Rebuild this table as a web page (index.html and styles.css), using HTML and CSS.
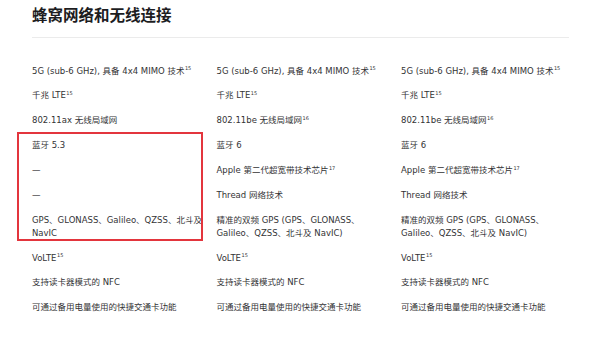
FILE: index.html
```html
<!DOCTYPE html>
<html lang="zh-CN">
<head>
<meta charset="utf-8">
<link rel="stylesheet" href="styles.css">
</head>
<body>
<div class="page">
  <h2 class="title">蜂窝网络和无线连接</h2>
  <div class="divider"></div>
  <div class="grid">
    <ul class="col">
      <li>5G (sub-6 GHz), 具备 4x4 MIMO 技术<sup>15</sup></li>
      <li>千兆 LTE<sup>15</sup></li>
      <li>802.11ax 无线局域网</li>
      <li>蓝牙 5.3</li>
      <li>—</li>
      <li>—</li>
      <li>GPS、GLONASS、Galileo、QZSS、北斗及 NavIC</li>
      <li>VoLTE<sup>15</sup></li>
      <li>支持读卡器模式的 NFC</li>
      <li>可通过备用电量使用的快捷交通卡功能</li>
    </ul>
    <ul class="col">
      <li>5G (sub-6 GHz), 具备 4x4 MIMO 技术<sup>15</sup></li>
      <li>千兆 LTE<sup>15</sup></li>
      <li>802.11be 无线局域网<sup>16</sup></li>
      <li>蓝牙 6</li>
      <li>Apple 第二代超宽带技术芯片<sup>17</sup></li>
      <li>Thread 网络技术</li>
      <li>精准的双频 GPS (GPS、GLONASS、Galileo、QZSS、北斗及 NavIC)</li>
      <li>VoLTE<sup>15</sup></li>
      <li>支持读卡器模式的 NFC</li>
      <li>可通过备用电量使用的快捷交通卡功能</li>
    </ul>
    <ul class="col">
      <li>5G (sub-6 GHz), 具备 4x4 MIMO 技术<sup>15</sup></li>
      <li>千兆 LTE<sup>15</sup></li>
      <li>802.11be 无线局域网<sup>16</sup></li>
      <li>蓝牙 6</li>
      <li>Apple 第二代超宽带技术芯片<sup>17</sup></li>
      <li>Thread 网络技术</li>
      <li>精准的双频 GPS (GPS、GLONASS、Galileo、QZSS、北斗及 NavIC)</li>
      <li>VoLTE<sup>15</sup></li>
      <li>支持读卡器模式的 NFC</li>
      <li>可通过备用电量使用的快捷交通卡功能</li>
    </ul>
  </div>
  <div class="highlight"></div>
</div>
</body>
</html>
```
FILE: styles.css
```css
html, body {
  margin: 0;
  padding: 0;
  background: #ffffff;
}
body {
  font-family: "DejaVu Sans", "Noto Sans CJK SC", sans-serif;
  color: #333335;
}
.page {
  position: relative;
  width: 600px;
  height: 341px;
  padding: 4px 31px 0 32px;
  box-sizing: border-box;
}
.title {
  margin: 0;
  font-size: 15.5px;
  line-height: 20px;
  font-weight: 700;
  color: #1d1d1f;
  font-family: "Noto Sans CJK SC", sans-serif;
}
.divider {
  margin-top: 13px;
  height: 1px;
  background: #ebebeb;
}
.grid {
  margin-top: 26.5px;
  display: grid;
  grid-template-columns: 170px 170px 170px;
  column-gap: 14.5px;
}
.col {
  list-style: none;
  margin: 0;
  padding: 0;
  display: flex;
  flex-direction: column;
  gap: 12.1px;
}
.col li {
  font-size: 8.5px;
  line-height: 12.8px;
}
.col sup {
  font-size: 5px;
  line-height: 0;
  vertical-align: 3.5px;
  margin-left: 0.5px;
}
.highlight {
  position: absolute;
  left: 17px;
  top: 132px;
  width: 186px;
  height: 109px;
  box-sizing: border-box;
  border: 2px solid #e3353d;
}
```
